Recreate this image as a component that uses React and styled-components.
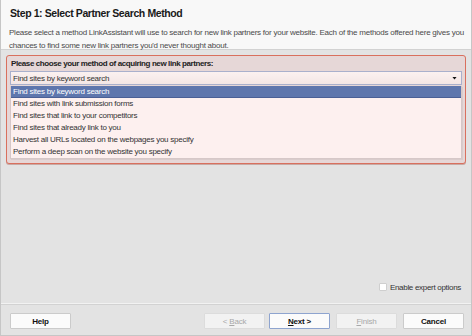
import React from 'react';
import styled, { createGlobalStyle } from 'styled-components';

const methods = [
  'Find sites by keyword search',
  'Find sites with link submission forms',
  'Find sites that link to your competitors',
  'Find sites that already link to you',
  'Harvest all URLs located on the webpages you specify',
  'Perform a deep scan on the website you specify',
];

const App = () => {
  return (
    <>
      <GlobalStyle />
      <Window>
        <Header>
          <Title>Step 1: Select Partner Search Method</Title>
          <Description>
            Please select a method LinkAssistant will use to search for new link partners for your website. Each of the methods offered here gives you
            <br />
            chances to find some new link partners you'd never thought about.
          </Description>
        </Header>

        <Body>
          <GroupBox>
            <GroupLabel>Please choose your method of acquiring new link partners:</GroupLabel>
            <Combo>
              <span>{methods[0]}</span>
              <Arrow />
            </Combo>
            <List>
              {methods.map((m, i) => (
                <Item key={m} selected={i === 0}>{m}</Item>
              ))}
            </List>
          </GroupBox>

          <Spacer />

          <ExpertRow>
            <Checkbox />
            <span>Enable expert options</span>
          </ExpertRow>
        </Body>

        <Footer>
          <Button>Help</Button>
          <Grow />
          <Button disabled>&lt; <u>B</u>ack</Button>
          <Button primary>
            <u>N</u>ext &gt;
          </Button>
          <Button disabled gap><u>F</u>inish</Button>
          <Button gap>Cancel</Button>
        </Footer>
      </Window>
    </>
  );
};

// Styled components
const font = `"Liberation Sans", Arial, sans-serif`;

const GlobalStyle = createGlobalStyle`
  html, body {
    margin: 0;
    padding: 0;
    width: 472px;
    height: 336px;
    overflow: hidden;
    background: #e3e3e3;
    font-family: ${font};
  }
  * { box-sizing: border-box; }
`;

const Window = styled.div`
  width: 472px;
  height: 336px;
  display: flex;
  flex-direction: column;
  background: #e3e3e3;
  border: 1px solid #c6c6c6;
  border-top: none;
`;

const Header = styled.div`
  height: 50px;
  background: #f8f8f8;
  border-bottom: 1px solid #d2d2d2;
  padding: 6px 3px 0 8px;
`;

const Title = styled.div`
  font-size: 10.5px;
  letter-spacing: -0.4px;
  font-weight: bold;
  color: #1a1a1a;
  height: 20px;
  line-height: 14px;
  padding-left: 1px;
`;

const Description = styled.div`
  font-size: 8px;
  letter-spacing: -0.24px;
  line-height: 13px;
  color: #4a4a4a;
  white-space: nowrap;
`;

const Body = styled.div`
  flex: 1;
  display: flex;
  flex-direction: column;
  padding: 5px 5px 0 5px;
  border-bottom: 1px solid #f2f2f2;
`;

const GroupBox = styled.div`
  height: 109px;
  background: #e6d7d7;
  border: 1px solid #d9705e;
  border-radius: 3px;
  padding: 2px 3px 0 3px;
  box-shadow: 0 1px 0 #c9a9a4;
`;

const GroupLabel = styled.div`
  font-size: 8px;
  letter-spacing: -0.4px;
  font-weight: bold;
  color: #222;
  height: 13px;
  line-height: 12px;
  padding-left: 1px;
`;

const Combo = styled.div`
  height: 14px;
  display: flex;
  align-items: center;
  justify-content: space-between;
  background: linear-gradient(#fbf1f0, #f3e6e5);
  border: 1px solid #a9b0cc;
  padding: 0 4px 0 2px;
  font-size: 8px;
  letter-spacing: -0.25px;
  color: #333;
`;

const Arrow = styled.span`
  width: 5px;
  height: 3px;
  background: #111;
  clip-path: polygon(0 0, 100% 0, 50% 100%);
`;

const List = styled.div`
  background: #fdf0ef;
  border: 1px solid #d6c8c8;
  border-top: none;
  margin-top: 1px;
  height: 73px;
  box-shadow: 1px 1px 0 #d9cccc;
`;

const Item = styled.div`
  height: 12px;
  line-height: 12px;
  font-size: 8px;
  letter-spacing: -0.25px;
  padding-left: 2px;
  color: ${p => (p.selected ? '#fff' : '#333')};
  background: ${p => (p.selected ? '#5e76ad' : 'transparent')};
  border-bottom: ${p => (p.selected ? '1px solid #4a5f95' : 'none')};
`;

const Spacer = styled.div`
  flex: 1;
`;

const ExpertRow = styled.div`
  display: flex;
  align-items: center;
  justify-content: flex-end;
  gap: 3px;
  font-size: 8px;
  letter-spacing: -0.3px;
  color: #333;
  padding-right: 5px;
  height: 14px;
  margin-bottom: 9px;
`;

const Checkbox = styled.span`
  width: 8px;
  height: 8px;
  background: #fff;
  border: 1px solid #cfcfcf;
  border-radius: 1px;
`;

const Footer = styled.div`
  height: 31px;
  display: flex;
  align-items: flex-start;
  padding: 8px 7px 0 9px;
  gap: 4px;
  border-top: 1px solid #d2d2d2;
`;

const Grow = styled.div`
  flex: 1;
`;

const Button = styled.button`
  width: 61px;
  height: 16px;
  padding: 0;
  margin-left: ${p => (p.gap ? '2px' : '0')};
  font-family: ${font};
  font-size: 8px;
  letter-spacing: -0.2px;
  font-weight: ${p => (p.disabled ? 'normal' : 'bold')};
  color: ${p => (p.disabled ? '#a8a8a8' : '#111')};
  background: ${p => (p.disabled ? '#f2f2f2' : '#fbfbfb')};
  border: 1px solid ${p => (p.primary ? '#8ea4cf' : p.disabled ? '#dcdcdc' : '#cbcbcb')};
  border-radius: 1px;

  u {
    text-decoration: underline;
  }
`;

export default App;
